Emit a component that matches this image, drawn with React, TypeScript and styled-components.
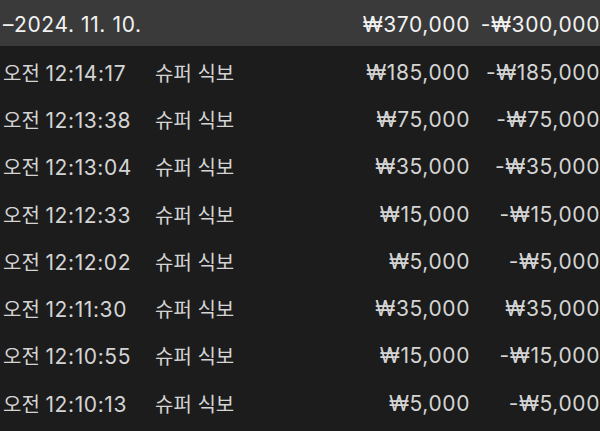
import React from "react";
import styled, { createGlobalStyle } from "styled-components";

const GlobalStyle = createGlobalStyle`
    html, body {
        margin: 0;
        padding: 0;
        background: #1c1c1c;
    }
    body {
        font-family: Inter, "Noto Sans CJK KR", sans-serif;
    }
`;

interface Entry {
    meridiem: string;
    time: string;
    name: string;
    amount: number;
    balance: number;
}

const entries: Entry[] = [
    { meridiem: "오전", time: "12:14:17", name: "슈퍼 식보", amount: 185000, balance: -185000 },
    { meridiem: "오전", time: "12:13:38", name: "슈퍼 식보", amount: 75000, balance: -75000 },
    { meridiem: "오전", time: "12:13:04", name: "슈퍼 식보", amount: 35000, balance: -35000 },
    { meridiem: "오전", time: "12:12:33", name: "슈퍼 식보", amount: 15000, balance: -15000 },
    { meridiem: "오전", time: "12:12:02", name: "슈퍼 식보", amount: 5000, balance: -5000 },
    { meridiem: "오전", time: "12:11:30", name: "슈퍼 식보", amount: 35000, balance: 35000 },
    { meridiem: "오전", time: "12:10:55", name: "슈퍼 식보", amount: 15000, balance: -15000 },
    { meridiem: "오전", time: "12:10:13", name: "슈퍼 식보", amount: 5000, balance: -5000 },
];

function won(v: number) {
    const s = "₩" + Math.abs(v).toLocaleString("en-US");
    return v < 0 ? "-" + s : s;
}

function App() {
    return (
        <>
            <GlobalStyle />
            <Page>
                <Header>
                    <Cell><Num>–2024. 11. 10.</Num></Cell>
                    <Cell />
                    <Money><Num>{won(370000)}</Num></Money>
                    <Money><Num>{won(-300000)}</Num></Money>
                </Header>
                {entries.map((e, i) => (
                    <Row key={i}>
                        <Cell>{e.meridiem} <Num>{e.time}</Num></Cell>
                        <Cell>{e.name}</Cell>
                        <Money><Num>{won(e.amount)}</Num></Money>
                        <Money><Num>{won(e.balance)}</Num></Money>
                    </Row>
                ))}
            </Page>
        </>
    );
}

const Page = styled.div`
    width: 600px;
    height: 431px;
    overflow: hidden;
    background: #1c1c1c;
`;

const Row = styled.div`
    display: grid;
    grid-template-columns: 152px 160px 1fr 130px;
    align-items: center;
    box-sizing: border-box;
    height: 47.3px;
    padding: 5px 0 0 3px;
    color: #d4d4d4;
    font-size: 20px;
`;

const Header = styled(Row)`
    height: 46px;
    padding-top: 2px;
    background: #3a3a3a;
    color: #f2f2f2;
`;

const Cell = styled.div`
    white-space: nowrap;
`;

const Money = styled(Cell)`
    text-align: right;
`;

const Num = styled.span`
    font-size: 21px;
    letter-spacing: 0.6px;
`;

export default App;
